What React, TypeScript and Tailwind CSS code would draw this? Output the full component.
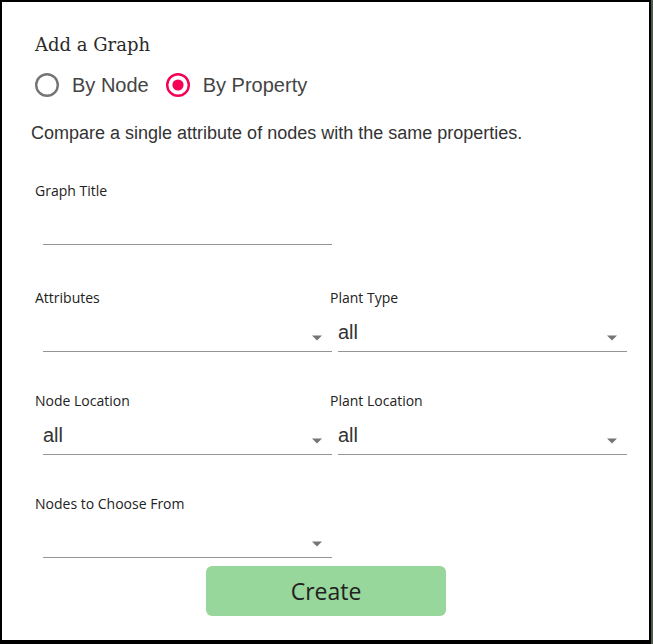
import React, { useState } from "react"

const sans = { fontFamily: '"Liberation Sans", Arial, sans-serif' }
const labelFont = { fontFamily: '"Open Sans", "Noto Sans", sans-serif' }

const Arrow = () => (
    <svg width="12" height="6" viewBox="0 0 12 6" className="shrink-0">
        <path d="M1 0.5 L11 0.5 L6 5.5 Z" fill="#757575" />
    </svg>
)

const Radio = ({ checked, label, onClick }: { checked: boolean, label: string, onClick: () => void }) => (
    <button type="button" onClick={onClick} className="flex items-center gap-[13px]">
        <svg width="24" height="24" viewBox="0 0 24 24">
            <circle cx="12" cy="12" r="10.8" fill="none" stroke={checked ? '#f50057' : '#757575'} strokeWidth="2.4" />
            {checked && <circle cx="12" cy="12" r="5.6" fill="#f50057" />}
        </svg>
        <span className="text-[20px] leading-6 text-[#444]" style={sans}>{label}</span>
    </button>
)

const Field = ({ label, value, select = true }: { label: string, value?: string, select?: boolean }) => (
    <div className="w-[295px] flex flex-col">
        <div className="h-5 text-[14px] leading-5 text-[#222]" style={labelFont}>{label}</div>
        <div className="ml-2 w-[289px] h-[44px] border-b border-[#949494] flex justify-between pt-[12px] pr-[9px]">
            <span className="text-[20px] leading-6 text-[#333]" style={sans}>{value}</span>
            {select && <div className="pt-[15px]"><Arrow /></div>}
        </div>
    </div>
)

const App = () => {
    const [mode, setMode] = useState<'node' | 'property'>('property')

    return (
        <div className="w-[653px] h-[644px] bg-[#4b5a4b] overflow-hidden">
            <div className="w-[651px] h-[644px] bg-black pl-[2px] pt-[2px]">
                <div className="w-[647px] h-[638px] bg-white pl-[33px] pt-[31px] flex flex-col">
                    <h2 className="h-6 text-[18px] leading-6 text-[#2a2a2a]" style={{ fontFamily: '"DejaVu Serif", Georgia, serif' }}>Add a Graph</h2>
                    <div className="mt-4 flex items-center gap-[17px]">
                        <Radio checked={mode === 'node'} label="By Node" onClick={() => setMode('node')} />
                        <Radio checked={mode === 'property'} label="By Property" onClick={() => setMode('property')} />
                    </div>
                    <p className="mt-[25px] -ml-1 text-[18px] leading-[22px] text-[#333]" style={sans}>
                        Compare a single attribute of nodes with the same properties.
                    </p>

                    <div className="mt-[37px]">
                        <Field label="Graph Title" select={false} />
                    </div>
                    <div className="mt-[43px] flex">
                        <Field label="Attributes" />
                        <Field label="Plant Type" value="all" />
                    </div>
                    <div className="mt-[39px] flex">
                        <Field label="Node Location" value="all" />
                        <Field label="Plant Location" value="all" />
                    </div>
                    <div className="mt-[39px]">
                        <Field label="Nodes to Choose From" />
                    </div>
                    <div className="mt-[8px] pl-[171px]">
                        <button className="w-[240px] h-[50px] bg-[#98d79b] rounded-md text-[23px] leading-[46px] text-[#222]" style={labelFont}>
                            Create
                        </button>
                    </div>
                </div>
            </div>
        </div>
    )
}

export default App
